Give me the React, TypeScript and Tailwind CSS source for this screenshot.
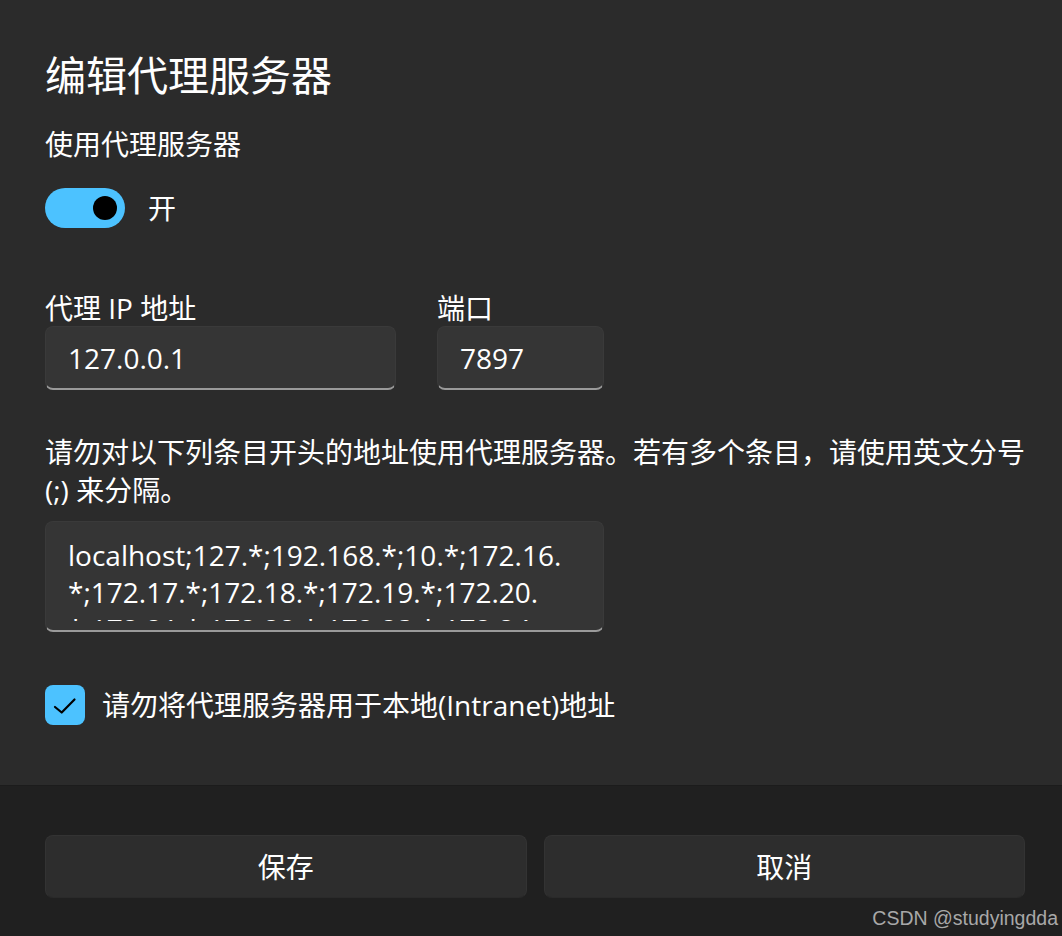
import React from "react";

const font = "font-['Open_Sans','Noto_Sans_CJK_SC',sans-serif]";

function Toggle() {
  return (
    <div className="flex items-center gap-[23px]">
      <div className="flex h-[40px] w-[80px] items-center justify-end rounded-full bg-[#4cc2ff] pr-[8px]">
        <div className="h-[24px] w-[24px] rounded-full bg-black" />
      </div>
      <span className="text-[28px] leading-[40px]">开</span>
    </div>
  );
}

function Field({ label, value, width }: { label: string; value: string; width: string }) {
  return (
    <div className="flex flex-col">
      <span className="text-[28px] leading-[36px]">{label}</span>
      <div
        className={`flex h-[64px] items-center rounded-[8px] border border-b-2 border-[#3a3a3a] border-b-[#9a9a9a] bg-[#353535] pl-[22px] text-[28px] ${width}`}
      >
        {value}
      </div>
    </div>
  );
}

export default function App() {
  return (
    <div className={`relative flex h-[936px] w-[1062px] flex-col text-white ${font}`}>
      <div className="flex h-[785px] flex-col bg-[#2b2b2b] pl-[45px] pr-[30px]">
        <h1 className="pt-[48px] text-[41px] leading-[54px] font-normal">编辑代理服务器</h1>
        <p className="mt-[22px] text-[28px] leading-[40px]">使用代理服务器</p>
        <div className="mt-[24px]">
          <Toggle />
        </div>

        <div className="mt-[62px] flex gap-[41px]">
          <Field label="代理 IP 地址" value="127.0.0.1" width="w-[351px]" />
          <Field label="端口" value="7897" width="w-[167px]" />
        </div>

        <p className="mt-[43px] whitespace-nowrap text-[28px] leading-[38px]">
          请勿对以下列条目开头的地址使用代理服务器。若有多个条目，请使用英文分号
          <br />
          (;) 来分隔。
        </p>

        <div className="mt-[12px] h-[111px] w-[559px] rounded-[8px] border border-b-2 border-[#3a3a3a] border-b-[#9a9a9a] bg-[#353535] pl-[22px]">
          <div className="mt-[5px] h-[93.5px] overflow-hidden pt-[10px] text-[28px] leading-[37px]">
            <div>localhost;127.*;192.168.*;10.*;172.16.</div>
            <div>*;172.17.*;172.18.*;172.19.*;172.20.</div>
            <div>*;172.21.*;172.22.*;172.23.*;172.24.</div>
          </div>
        </div>

        <div className="mt-[53px] flex items-center gap-[17px]">
          <div className="flex h-[40px] w-[40px] items-center justify-center rounded-[8px] bg-[#4cc2ff]">
            <svg width="40" height="40" viewBox="0 0 40 40" fill="none">
              <path d="M10 22 L16.7 27.5 L29.5 14.5" stroke="black" strokeWidth="2.2" strokeLinecap="round" strokeLinejoin="round" />
            </svg>
          </div>
          <span className="text-[28px] leading-[40px]">请勿将代理服务器用于本地(Intranet)地址</span>
        </div>
      </div>

      <div className="flex flex-1 gap-[17px] border-t border-[#1c1c1c] bg-[#202020] pl-[45px] pr-[37px] pt-[49px]">
        <button className="h-[63px] flex-1 rounded-[8px] border border-[#333333] border-b-[#2a2a2a] bg-[#2d2d2d] text-[28px] text-white">
          保存
        </button>
        <button className="h-[63px] flex-1 rounded-[8px] border border-[#333333] border-b-[#2a2a2a] bg-[#2d2d2d] text-[28px] text-white">
          取消
        </button>
      </div>

      <span className="absolute bottom-[6px] right-[4px] font-['Liberation_Sans',sans-serif] text-[19.5px] leading-[24px] text-[#a8a8a8]">
        CSDN @studyingdda
      </span>
    </div>
  );
}
